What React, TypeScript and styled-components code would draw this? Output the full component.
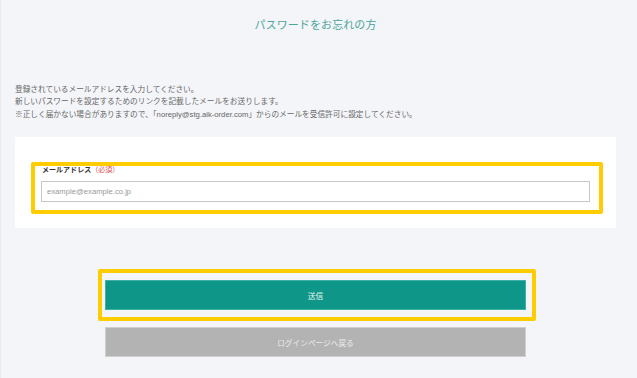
import React from "react";
import styled, { createGlobalStyle } from "styled-components";

const GlobalStyle = createGlobalStyle`
  html, body {
    margin: 0;
    padding: 0;
    background: #f4f5f9;
  }
  body {
    font-family: "Liberation Sans", "Noto Sans CJK JP", sans-serif;
  }
  * {
    box-sizing: border-box;
  }
`;

const Page = styled.div({
  width: 637,
  minHeight: 378,
  padding: "0 21px 0 14px",
  background: "#f4f5f9",
  borderLeft: "1px solid #e9eaee",
});

const Title = styled.h1({
  margin: 0,
  paddingTop: 19,
  fontSize: 11,
  lineHeight: "13px",
  fontWeight: 400,
  textAlign: "center",
  color: "#4ba59a",
  letterSpacing: "0.1px",
});

const Description = styled.div({
  marginTop: 52,
  fontSize: 7.68,
  lineHeight: "12px",
  color: "#666",
  p: {
    margin: 0,
    height: 12,
    whiteSpace: "nowrap",
  },
});

// keep the reference mark out of any colour emoji fallback
const NoteMark = styled.span({
  fontFamily: '"Noto Sans CJK JP", sans-serif',
  fontVariantEmoji: "text",
  color: "#666",
});

const Card = styled.div({
  marginTop: 17,
  background: "#fff",
  padding: "25px 13px 14px 16px",
});

const Highlight = styled.div<{ $pad: string; $mx?: string }>(({ $pad, $mx }) => ({
  border: "4px solid #ffcc00",
  borderRadius: 2,
  padding: $pad,
  margin: $mx ?? 0,
}));

const Label = styled.label({
  display: "block",
  paddingLeft: 1,
  fontSize: 7.04,
  lineHeight: "8px",
  fontWeight: 700,
  color: "#333",
  marginBottom: 7,
  span: {
    color: "#e0504f",
    fontWeight: 400,
  },
});

const Input = styled.input({
  display: "block",
  width: "100%",
  height: 21,
  border: "1px solid #c8c8c8",
  padding: "0 5px",
  fontFamily: "inherit",
  fontSize: 7.68,
  color: "#333",
  background: "#fff",
  outline: "none",
  "&::placeholder": {
    color: "#999",
  },
});

const ButtonArea = styled.div({
  width: 421,
  margin: "41px auto 0",
  display: "flex",
  flexDirection: "column",
});

const Button = styled.button<{ $tone: "primary" | "muted" }>(({ $tone }) => ({
  display: "block",
  width: "100%",
  height: 30,
  border: $tone === "primary" ? "1px solid #3fb0a3" : "1px solid #cfcfcf",
  background: $tone === "primary" ? "#0e9688" : "#b3b3b3",
  color: $tone === "primary" ? "#e8f5f3" : "#ececec",
  fontFamily: "inherit",
  fontSize: 7.68,
  padding: 0,
  cursor: "pointer",
}));

const BackButton = styled(Button)({
  marginTop: 6,
});

export default function App() {
  return (
    <>
      <GlobalStyle />
      <Page>
        <Title>パスワードをお忘れの方</Title>
        <Description>
          <p>登録されているメールアドレスを入力してください。</p>
          <p>新しいパスワードを設定するためのリンクを記載したメールをお送りします。</p>
          <p>
            <NoteMark>※</NoteMark>正しく届かない場合がありますので、「noreply@stg.aik-order.com」からのメールを受信許可に設定してください。
          </p>
        </Description>
        <Card>
          <Highlight $pad="0 9px 8px 6px">
            <Label>
              メールアドレス<span>（必須）</span>
            </Label>
            <Input type="email" placeholder="example@example.co.jp" />
          </Highlight>
        </Card>
        <ButtonArea>
          <Highlight $pad="7px 6px 7px 3px" $mx="0 -10px 0 -7px">
            <Button $tone="primary">送信</Button>
          </Highlight>
          <BackButton $tone="muted">ログインページへ戻る</BackButton>
        </ButtonArea>
      </Page>
    </>
  );
}
